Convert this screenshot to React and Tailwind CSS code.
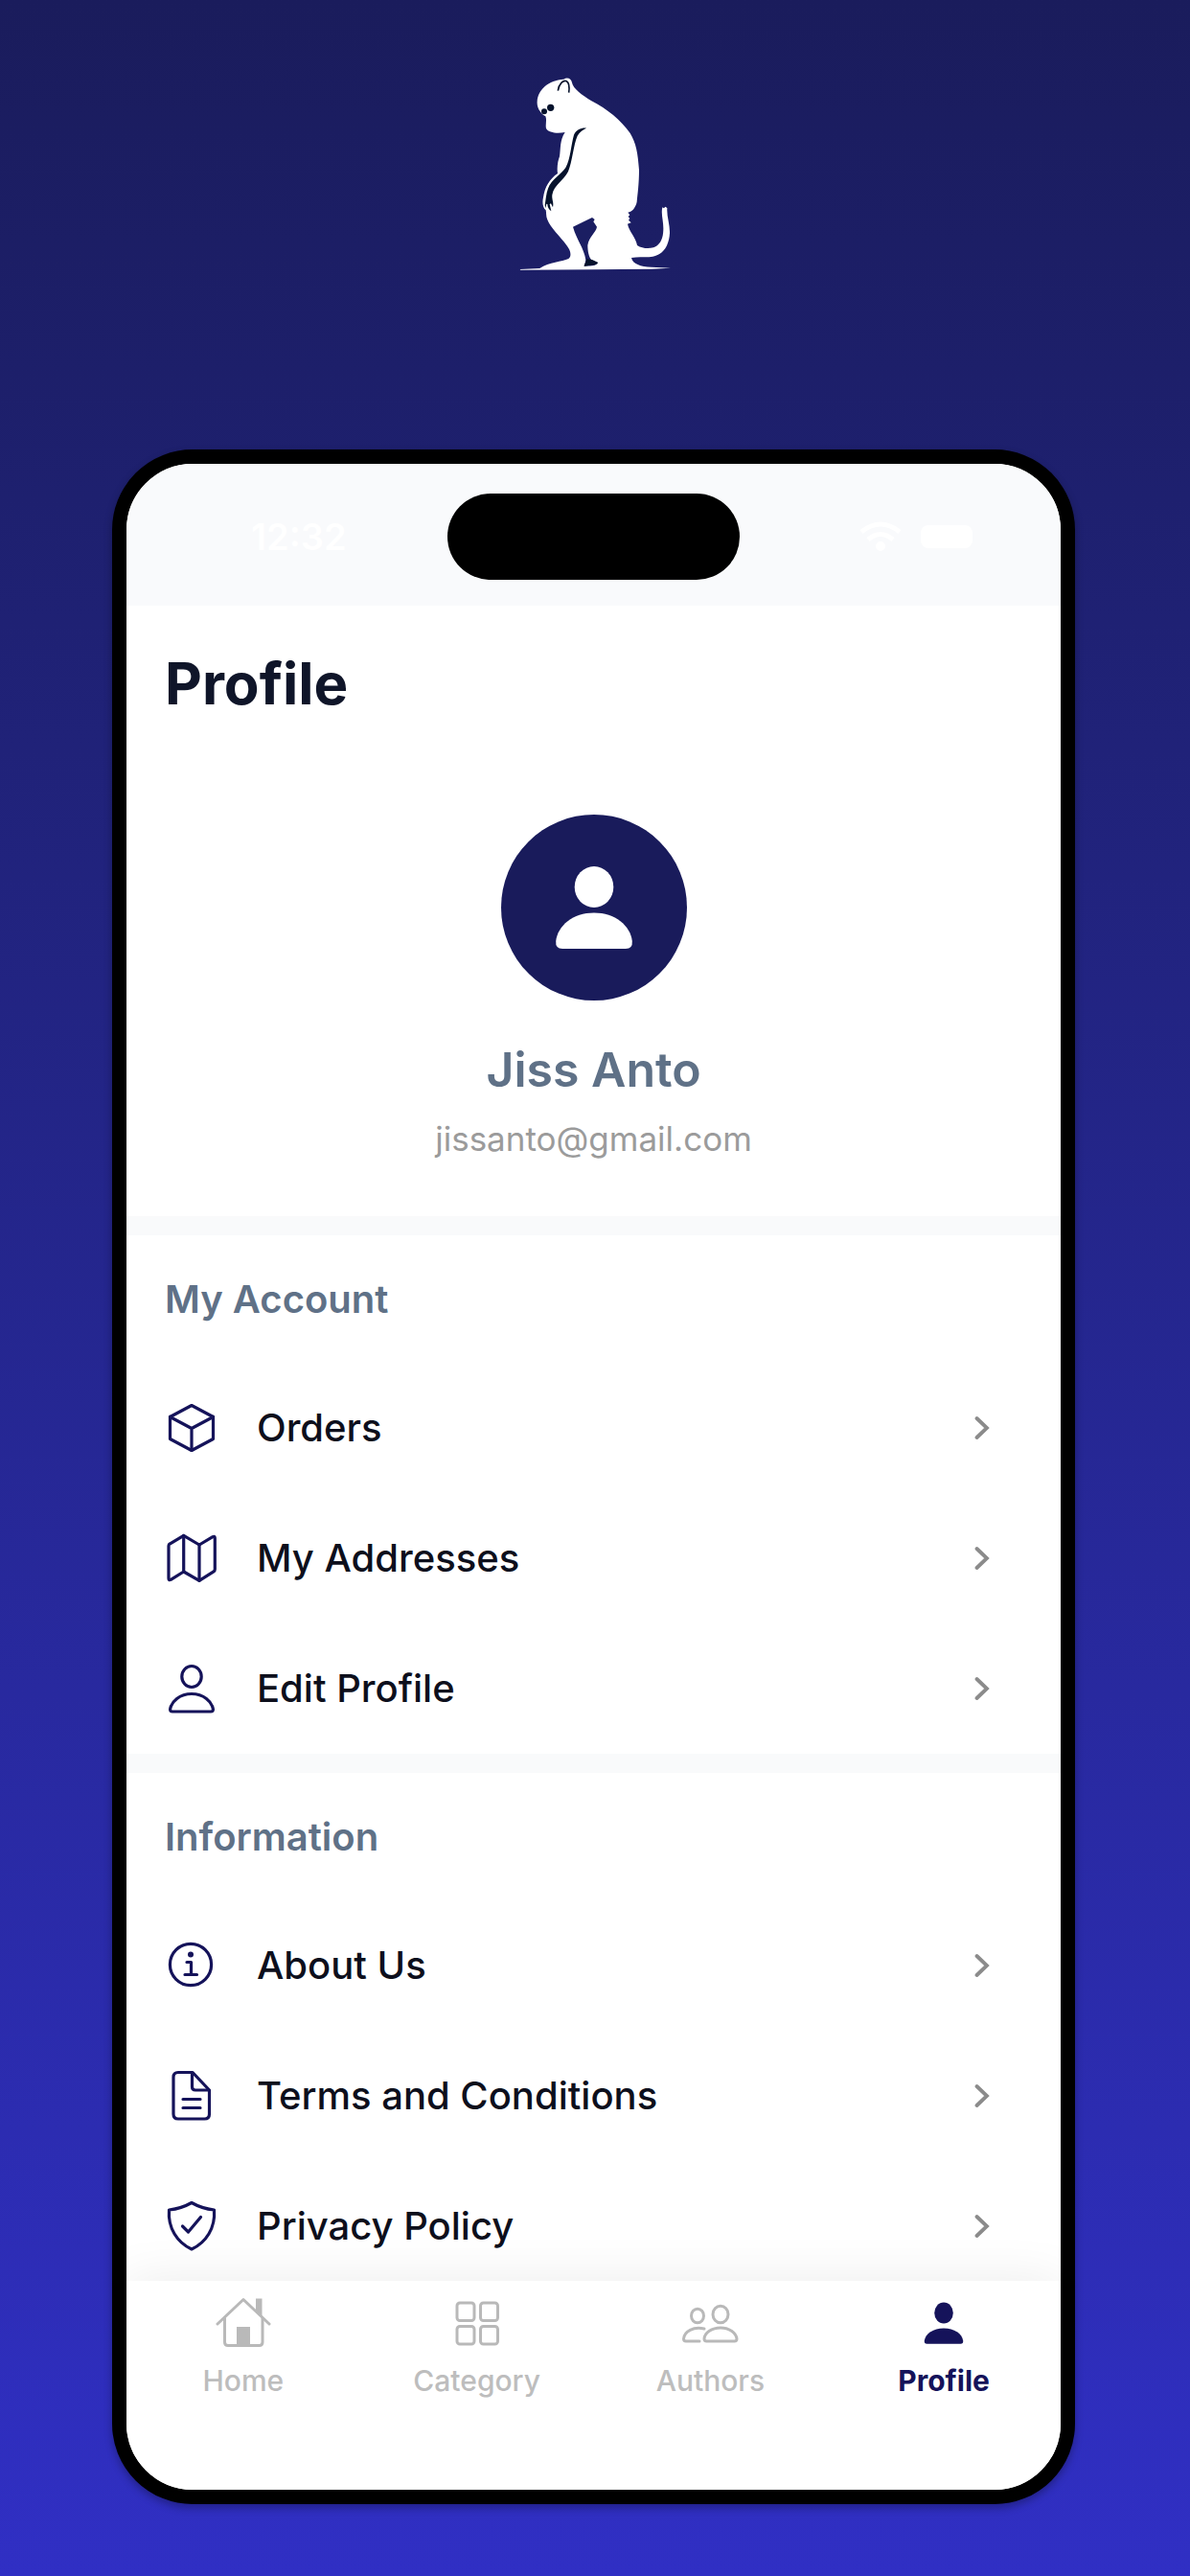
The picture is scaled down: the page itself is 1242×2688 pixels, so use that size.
function MonkeyLogo() {
  return (
    <svg viewBox="0 0 600 720" className="h-60 w-50" role="img" aria-label="Monkey logo">
      <g fill="#ffffff">
        <path d="M205 68 C216 60 229 66 231 79 C234 98 262 117 292 136 C340 160 385 197 413 237 C432 268 437 300 441 352 C441 396 436 430 434 452 C430 470 420 482 406 485 L412 493 L407 498 L412 504 L408 509 L416 517 L405 521 C410 545 431 563 435 588 C450 598 470 599 486 595 C512 585 517 560 517 535 C517 510 509 490 514 469 L519 472 L523 467 L529 471 C527 498 538 522 537 550 C535 590 515 618 484 623 C462 627 440 622 417 627 C421 646 445 655 480 656 L540 659 L480 662 L300 664 L70 665 L68 663 L130 660 C160 640 200 640 220 630 C230 622 226 608 222 600 C205 570 165 537 154 508 C149 497 151 485 149 478 C138 470 138 450 141 438 C146 405 160 381 186 363 C183 345 187 322 192 310 C196 285 192 260 209 234 C185 239 158 236 150 222 C147 209 153 196 148 184 C136 178 120 160 122 138 C124 100 158 71 205 68 Z" />
      </g>
      <path
        d="M234 530 L294 501 L302 507 L298 514 L309 530 C306 548 284 560 280 588 C280 606 284 625 292 634 L308 641 C312 650 300 652 270 653 L274 634 C270 600 245 570 234 530 Z"
        fill="#1b1e62"
      />
      <g fill="#06122c">
        <path d="M276 631 L294 633 L313 642 C308 651 290 649 269 654 C268 648 276 642 276 631 Z" />
        <path d="M276 221 C262 219 244 226 237 242 C228 272 227 315 211 345 C197 366 166 382 156 410 C150 425 149 445 146 462 L148 472 L151 458 L154 459 C154 468 159 476 166 481 L161 459 L165 457 L171 469 C175 455 167 444 169 430 C175 398 205 385 219 357 C232 325 235 275 248 245 C254 234 265 226 276 221 Z" />
        <circle cx="164" cy="157" r="11" />
        <circle cx="144" cy="169" r="9" />
      </g>
      <path
        d="M187 104 C190 82 204 70 214 74 C224 80 223 96 221 110"
        fill="none"
        stroke="#06122c"
        strokeWidth="5"
      />
    </svg>
  );
}

function LineIcon({ children }) {
  return (
    <svg
      viewBox="0 0 56 56"
      className="size-14 shrink-0"
      fill="none"
      stroke="#15135a"
      strokeWidth="3.2"
      strokeLinecap="round"
      strokeLinejoin="round"
      aria-hidden="true"
    >
      {children}
    </svg>
  );
}

function BoxIcon() {
  return (
    <LineIcon>
      <path d="M28 4.5 L50.5 16.5 V39.5 L28 51.5 L5.5 39.5 V16.5 Z" />
      <path d="M5.5 16.5 L28 28.5 L50.5 16.5 M28 28.5 V51.5" />
    </LineIcon>
  );
}

function MapIcon() {
  return (
    <LineIcon>
      <path d="M4 15 Q4 13.5 5.5 12.8 L19.7 4.3 L36 14 L50 5.6 Q52.3 4.6 52.3 7 V39.5 Q52.3 41 51 41.8 L36 51.3 L19.7 42 L6.3 50.4 Q4 51.4 4 49 Z" />
      <path d="M19.7 4.3 V42 M36 14 V51.3" />
    </LineIcon>
  );
}

function UserIcon() {
  return (
    <LineIcon>
      <ellipse cx="28" cy="15.5" rx="10.2" ry="11" />
      <path d="M28 33.5 C15.5 33.5 7 41.5 5.6 49.5 Q5.4 52 8 52 H48 Q50.6 52 50.4 49.5 C49 41.5 40.5 33.5 28 33.5 Z" />
    </LineIcon>
  );
}

function InfoIcon() {
  return (
    <LineIcon>
      <circle cx="27" cy="27" r="21.6" />
      <circle cx="27" cy="16.5" r="3" fill="#15135a" stroke="none" />
      <path d="M23 24.5 H27.5 V37.5 M21 37.5 H33.5" />
    </LineIcon>
  );
}

function DocumentIcon() {
  return (
    <LineIcon>
      <path d="M14 3.5 H29 L46.5 22 V47 Q46.5 52 41.5 52 H14 Q9 52 9 47 V8.5 Q9 3.5 14 3.5 Z" />
      <path d="M28.5 4 V18.5 Q28.5 22 32 22 H46 M19 31.5 H37 M19 40.5 H37" />
    </LineIcon>
  );
}

function ShieldIcon() {
  return (
    <LineIcon>
      <path d="M28 3.5 C21 7.5 13 10 4.5 11 C3 30 13 45 28 52 C43 45 53 30 51.5 11 C43 10 35 7.5 28 3.5 Z" />
      <path d="M18.5 28 L24.5 34 L37.5 18.5" />
    </LineIcon>
  );
}

function ChevronIcon() {
  return (
    <svg viewBox="0 0 16 26" className="h-[26px] w-4 shrink-0" fill="none" aria-hidden="true">
      <path d="M2.5 3 L13 13 L2.5 23" stroke="#8b8b8b" strokeWidth="3.8" strokeLinecap="round" />
    </svg>
  );
}

function TabIcon({ children }) {
  return (
    <svg
      viewBox="0 0 60 60"
      className="size-15"
      fill="none"
      stroke="#b9b9b9"
      strokeWidth="3"
      strokeLinecap="round"
      strokeLinejoin="round"
      aria-hidden="true"
    >
      {children}
    </svg>
  );
}

function HomeIcon() {
  return (
    <TabIcon>
      <path d="M3 31 L30 5.5 L57 31" />
      <path d="M10.5 25 V50 Q10.5 53.5 14 53.5 H46.5 Q50 53.5 50 50 V25" />
      <path d="M43 4.5 H49.5 V23 L43 17 Z" fill="#b9b9b9" stroke="none" />
      <path d="M23 34 H37 V53 H23 Z" fill="#b9b9b9" stroke="none" />
    </TabIcon>
  );
}

function CategoryIcon() {
  return (
    <TabIcon>
      <rect x="9" y="9" width="18" height="18.5" rx="3" />
      <rect x="33.5" y="9" width="18" height="18.5" rx="3" />
      <rect x="9" y="33.5" width="18" height="18.5" rx="3" />
      <rect x="33.5" y="33.5" width="18" height="18.5" rx="3" />
    </TabIcon>
  );
}

function AuthorsIcon() {
  return (
    <TabIcon>
      <ellipse cx="17" cy="22.5" rx="6.5" ry="7.3" />
      <ellipse cx="41" cy="21" rx="8" ry="8.7" />
      <path d="M41 35 C32 35 24.5 40 24 46.5 Q24 49 26.5 49 H55.5 Q58 49 58 46.5 C57 40 50 35 41 35 Z" />
      <path d="M24 36 C13 33 3 39 2.5 46.5 Q2.5 49 5 49 H19" />
    </TabIcon>
  );
}

function ProfileIcon() {
  return (
    <TabIcon>
      <g fill="#15135a" stroke="none">
        <ellipse cx="30" cy="19.5" rx="9.8" ry="11" />
        <path d="M30 35.5 C19 35.5 11 41 9.8 48.5 Q9.5 51.8 12.5 51.8 H47.5 Q50.5 51.8 50.2 48.5 C49 41 41 35.5 30 35.5 Z" />
      </g>
    </TabIcon>
  );
}

const sections = [
  {
    title: "My Account",
    items: [
      { label: "Orders", icon: BoxIcon },
      { label: "My Addresses", icon: MapIcon },
      { label: "Edit Profile", icon: UserIcon },
    ],
  },
  {
    title: "Information",
    items: [
      { label: "About Us", icon: InfoIcon },
      { label: "Terms and Conditions", icon: DocumentIcon },
      { label: "Privacy Policy", icon: ShieldIcon },
    ],
  },
];

const tabs = [
  { label: "Home", icon: HomeIcon },
  { label: "Category", icon: CategoryIcon },
  { label: "Authors", icon: AuthorsIcon },
  { label: "Profile", icon: ProfileIcon, active: true },
];

function StatusBar() {
  return (
    <div className="grid h-[148px] shrink-0 grid-cols-[1fr_305px_1fr] items-center bg-[#f9fafc] pt-1">
      <span className="pl-[130px] text-[38px] leading-[48px] font-semibold text-white">12:32</span>
      <div className="h-[90px] rounded-full bg-black" />
      <div className="flex items-center justify-end gap-5 pr-[92px]">
        <svg viewBox="0 0 44 32" className="h-8 w-11" fill="none" stroke="#ffffff" strokeWidth="5" aria-hidden="true">
          <path d="M2 11 Q22 -5 42 11 M9 19 Q22 8 35 19" />
          <circle cx="22" cy="26" r="2.5" fill="#ffffff" />
        </svg>
        <div className="h-6 w-[54px] rounded-lg bg-white" />
      </div>
    </div>
  );
}

function MenuSection({ title, items }) {
  return (
    <section className="border-t-20 border-[#f9fafb]">
      <h2 className="flex h-[133px] items-center pl-10 text-[40px] leading-[48px] font-semibold text-[#5f7187]">
        {title}
      </h2>
      <ul>
        {items.map(({ label, icon: Icon }) => (
          <li key={label}>
            <button type="button" className="flex h-[136px] w-full items-center pr-[74px] pl-10 text-left">
              <Icon />
              <span className="flex-1 pl-10 text-[40px] leading-[48px] font-medium text-[#0d0f1c]">
                {label}
              </span>
              <ChevronIcon />
            </button>
          </li>
        ))}
      </ul>
    </section>
  );
}

function TabBar() {
  return (
    <nav className="relative grid h-[218px] shrink-0 grid-cols-4 bg-white shadow-[0_0_50px_rgba(0,0,0,0.08)]">
      {tabs.map(({ label, icon: Icon, active }) => (
        <button
          key={label}
          type="button"
          aria-current={active ? "page" : undefined}
          className={`flex flex-col items-center gap-3 pt-[14px] text-[30px] leading-[36px] ${
            active ? "font-bold text-[#15135a]" : "font-medium text-[#bdbdbd]"
          }`}
        >
          <Icon />
          {label}
        </button>
      ))}
    </nav>
  );
}

export default function App() {
  return (
    <div className="flex h-screen flex-col bg-linear-to-b from-[#1a1c5c] to-[#302fc4] pt-[60px] pr-[120px] pb-[75px] pl-[117px] font-['Inter',sans-serif]">
      <header className="flex shrink-0 justify-center pb-[169px]">
        <MonkeyLogo />
      </header>

      <div className="flex min-h-0 flex-1 flex-col overflow-hidden rounded-[84px] border-15 border-black bg-white shadow-[0_4px_8px_rgba(0,0,0,0.3)]">
        <StatusBar />

        <main className="min-h-0 flex-1 overflow-hidden">
          <h1 className="flex h-[162px] items-center pl-10 text-[60px] leading-[72px] font-bold text-[#0f1529]">
            Profile
          </h1>

          <div className="flex flex-col items-center pt-14 pb-[57px]">
            <svg viewBox="0 0 194 194" className="size-[194px]" role="img" aria-label="Profile picture">
              <circle cx="97" cy="97" r="97" fill="#191b5b" />
              <g fill="#ffffff">
                <ellipse cx="97" cy="75.5" rx="20.3" ry="21.5" />
                <path d="M97 102.5 C75 102.5 59 116 57.2 132 Q56.5 140 64 140 H130 Q137.5 140 136.8 132 C135 116 119 102.5 97 102.5 Z" />
              </g>
            </svg>
            <p className="pt-10 text-[50px] leading-[64px] font-semibold text-[#5f7187]">Jiss Anto</p>
            <p className="pt-4 text-[35px] leading-[48px] text-[#9b9b9b]">jissanto@gmail.com</p>
          </div>

          {sections.map((section) => (
            <MenuSection key={section.title} {...section} />
          ))}
        </main>

        <TabBar />
      </div>
    </div>
  );
}
